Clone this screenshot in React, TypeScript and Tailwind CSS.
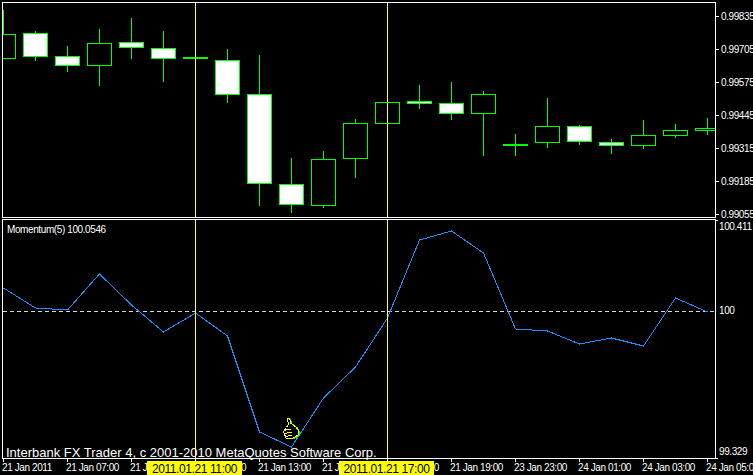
const GREEN = "#00ff00";
const BLUE = "#1e90ff";

// x of candle = 3.5 + 32 * index
const candles = [
  { high: 10, low: 58, top: 34.5, bottom: 58.5, filled: false },
  { high: 31, low: 60, top: 33.5, bottom: 56.5, filled: true },
  { high: 46, low: 71, top: 56.5, bottom: 65.5, filled: true },
  { high: 29, low: 85, top: 43.5, bottom: 65.5, filled: false },
  { high: 18, low: 58, top: 42.5, bottom: 47.5, filled: true },
  { high: 31, low: 81, top: 48.5, bottom: 58.5, filled: true },
  { high: 58, low: 58, top: 58, bottom: 58, filled: false },
  { high: 49, low: 102, top: 60.5, bottom: 94.5, filled: true },
  { high: 55, low: 205, top: 94.5, bottom: 183.5, filled: true },
  { high: 158, low: 212, top: 184.5, bottom: 204.5, filled: true },
  { high: 151, low: 207, top: 159.5, bottom: 205.5, filled: false },
  { high: 119, low: 177, top: 123.5, bottom: 158.5, filled: false },
  { high: 102, low: 123, top: 102.5, bottom: 123.5, filled: false },
  { high: 85, low: 108, top: 101.5, bottom: 103.5, filled: true },
  { high: 82, low: 119, top: 103.5, bottom: 113.5, filled: true },
  { high: 91, low: 155, top: 94.5, bottom: 113.5, filled: false },
  { high: 134, low: 155, top: 145, bottom: 145, filled: false },
  { high: 98, low: 147, top: 126.5, bottom: 142.5, filled: false },
  { high: 125, low: 144, top: 126.5, bottom: 141.5, filled: true },
  { high: 139, low: 153, top: 142.5, bottom: 145.5, filled: true },
  { high: 120, low: 148, top: 135.5, bottom: 145.5, filled: false },
  { high: 124, low: 137, top: 130.5, bottom: 135.5, filled: false },
  { high: 118, low: 134, top: 128.5, bottom: 130.5, filled: false },
];

const momentum = [
  288, 308, 310, 274, 305, 332, 313, 336, 432, 447, 398, 367, 318, 240, 231,
  253, 329, 331, 344, 338, 346, 298, 312,
];

const prices = ["0.99835", "0.99705", "0.99575", "0.99445", "0.99315", "0.99185", "0.99055"];

const times = [
  "21 Jan 2011",
  "21 Jan 07:00",
  "21 Jan 09:00",
  "21 Jan 11:00",
  "21 Jan 13:00",
  "21 Jan 15:00",
  "21 Jan 17:00",
  "21 Jan 19:00",
  "23 Jan 23:00",
  "24 Jan 01:00",
  "24 Jan 03:00",
  "24 Jan 05:00",
];

const Crosshairs = ({ y1, y2 }: { y1: number; y2: number }) => (
  <g stroke="#ffff40" shapeRendering="crispEdges">
    <line x1={195.5} x2={195.5} y1={y1} y2={y2} />
    <line x1={387.5} x2={387.5} y1={y1} y2={y2} />
  </g>
);

const Candle = ({ index, c }: { index: number; c: (typeof candles)[number] }) => {
  const x = 3.5 + index * 32;
  const isDoji = c.top === c.bottom;
  return (
    <g stroke={GREEN} shapeRendering="crispEdges">
      {c.high !== c.low && <line x1={x} x2={x} y1={c.high} y2={c.low + 1} />}
      {isDoji ? (
        <line x1={x - 12.5} x2={x + 12.5} y1={c.top} y2={c.top} strokeWidth={2} />
      ) : (
        <rect
          x={x - 12}
          y={c.top}
          width={24}
          height={c.bottom - c.top}
          fill={c.filled ? "#ffffff" : "#000000"}
        />
      )}
    </g>
  );
};

const THUMB =
  "M287 418.5 L289.5 418.5 L291 423.5 L296 427 L298.5 431 L298 435 L292.5 438.5 L286 438 L283.5 431.5 L286.5 427.5 L288.5 424 Z";

const ThumbsUp = () => (
  <g strokeLinejoin="round" shapeRendering="crispEdges">
    <path d={THUMB} fill="none" stroke={GREEN} transform="translate(1 0.5)" />
    <path d={THUMB} fill="#000000" stroke="#ffff00" />
    <path
      d="M284 430.5 L291 429 M285 433.5 L292 432 M286 436.5 L292 435"
      stroke="#ffff00"
      fill="none"
    />
  </g>
);

const App = () => {
  return (
    <div className="relative flex h-[475px] w-[753px] flex-col overflow-hidden bg-black pl-[2px] pt-[2px] font-['Liberation_Sans',Arial,sans-serif] text-[10px] leading-none tracking-[-0.4px] text-white">
      {/* candles */}
      <div className="flex h-[216px]">
        <div className="h-full w-[714px] shrink-0 border border-white">
          <svg width={712} height={214} viewBox="3 3 712 214" className="block">
            {candles.map((c, i) => (
              <Candle key={i} index={i} c={c} />
            ))}
            <Crosshairs y1={3} y2={217} />
          </svg>
        </div>
        <div className="flex flex-col pt-[9px]">
          {prices.map((p) => (
            <div key={p} className="flex h-[33px] shrink-0 items-start">
              <span className="mt-[5px] h-px w-[3px] bg-white" />
              <span className="ml-[2px] mt-px whitespace-nowrap">{p}</span>
            </div>
          ))}
        </div>
      </div>

      {/* momentum */}
      <div className="mt-px flex h-[240px]">
        <div className="relative h-full w-[714px] shrink-0 border border-white">
          <svg width={712} height={238} viewBox="3 220 712 238" className="block">
            <line
              x1={3}
              x2={715}
              y1={311.5}
              y2={311.5}
              stroke="#d8d8d8"
              strokeDasharray="4 3"
              shapeRendering="crispEdges"
            />
            <polyline
              points={momentum.map((y, i) => `${3.5 + i * 32},${y}`).join(" ")}
              fill="none"
              stroke={BLUE}
              shapeRendering="crispEdges"
            />
            <Crosshairs y1={220} y2={458} />
            <ThumbsUp />
          </svg>
          <span className="absolute left-[4px] top-[5px]">Momentum(5) 100.0546</span>
          <span className="absolute bottom-[-2px] left-[3px] whitespace-nowrap text-[13px] leading-[15px] tracking-normal">
            Interbank FX Trader 4, c 2001-2010 MetaQuotes Software Corp.
          </span>
        </div>
        <div className="relative flex flex-col pl-[3px]">
          <span className="absolute left-0 top-px h-px w-[2px] bg-white" />
          <span className="mt-[3px]">100.411</span>
          <span className="mt-[74px]">100</span>
          <span className="mt-[131px]">99.329</span>
          <span className="absolute bottom-0 left-0 h-px w-[2px] bg-white" />
        </div>
      </div>

      {/* time axis */}
      <div className="grid h-[16px] grid-cols-[repeat(12,64px)] pl-px">
        {times.map((t) => (
          <div key={t} className="relative whitespace-nowrap pt-[4px]">
            <span className="absolute left-0 top-0 h-[3px] w-px bg-white" />
            <span className="-ml-px">{t}</span>
          </div>
        ))}
      </div>

      <span className="absolute left-[147px] top-[461px] flex h-[14px] w-[95px] items-center justify-center bg-[#ffff00] pt-px text-[12px] text-black">
        2011.01.21 11:00
      </span>
      <span className="absolute left-[339px] top-[461px] flex h-[14px] w-[95px] items-center justify-center bg-[#ffff00] pt-px text-[12px] text-black">
        2011.01.21 17:00
      </span>
    </div>
  );
};

export default App;
